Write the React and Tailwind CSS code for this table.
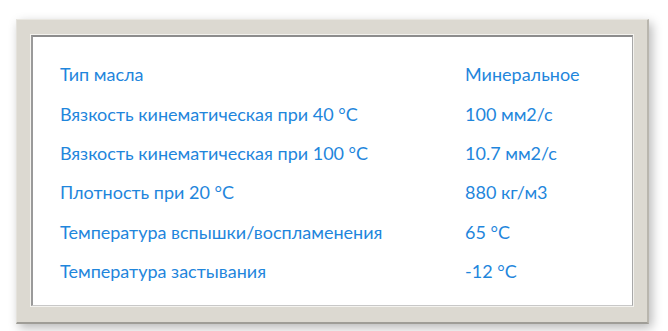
export default function App() {
  const rows = [
    ["Тип масла", "Минеральное"],
    ["Вязкость кинематическая при 40 °С", "100 мм2/с"],
    ["Вязкость кинематическая при 100 °С", "10.7 мм2/с"],
    ["Плотность при 20 °С", "880 кг/м3"],
    ["Температура вспышки/воспламенения", "65 °С"],
    ["Температура застывания", "-12 °С"],
  ];
  return (
    <div className="w-[668px] h-[331px] bg-white overflow-hidden" style={{ fontFamily: "Lato, 'Open Sans', sans-serif" }}>
      <div className="ml-[16px] mt-[19px] w-[633px] h-[305px] bg-[#dcd9d1] border-t border-t-[#e9e7e1] border-l border-l-[#e4e2dc] border-r-2 border-r-[#b9b6ae] border-b-2 border-b-[#9f9d97] shadow-[3px_4px_10px_rgba(0,0,0,0.28)] pl-[13px] pt-[14px] pr-[13px] pb-[15px]">
        <div className="w-full h-full border border-[#f4f3ef]">
          <div className="w-full h-full bg-white border-t-2 border-l-2 border-t-[#8d8d8d] border-l-[#9a9a9a] border-r border-b border-r-[#a8a8a8] border-b-[#c8c8c8] pl-[27px] pt-[18px]">
            {rows.map(([k, v]) => (
              <div key={k} className="flex h-[39.4px] items-center text-[18px] text-[#1f86dc]">
                <div className="w-[405px]">{k}</div>
                <div>{v}</div>
              </div>
            ))}
          </div>
        </div>
      </div>
    </div>
  );
}
